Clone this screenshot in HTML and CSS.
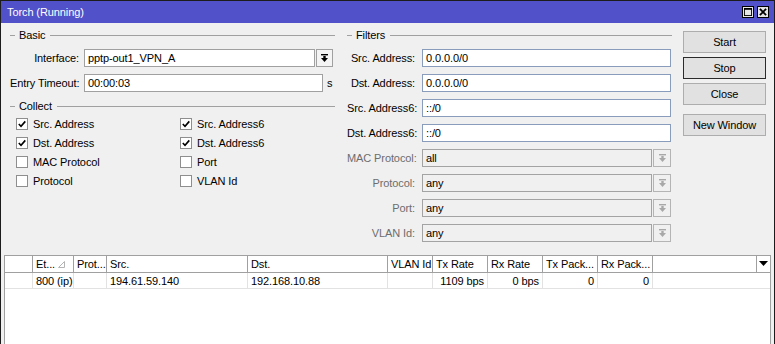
FILE: index.html
```html
<!DOCTYPE html>
<html>
<head>
<meta charset="utf-8">
<link rel="stylesheet" href="styles.css">
</head>
<body>
<div class="window">
  <div class="titlebar">
    <span class="title">Torch (Running)</span>
    <div class="tb-btns">
      <div class="tb-btn"><svg width="9" height="9" viewBox="0 0 9 9"><rect x="0.5" y="0.5" width="8" height="8" fill="none" stroke="#000"/><rect x="0" y="0" width="9" height="2" fill="#000"/></svg></div>
      <div class="tb-btn"><svg width="9" height="9" viewBox="0 0 9 9"><path d="M1 1 L8 8 M8 1 L1 8" stroke="#000" stroke-width="2"/></svg></div>
    </div>
  </div>
  <div class="top">
    <div class="col-left">
      <div class="legend end3">Basic</div>
      <div class="row">
        <div class="label">Interface:</div>
        <div class="field w-iface">pptp-out1_VPN_A</div>
        <div class="ddbtn"><svg width="9" height="9" viewBox="0 0 9 9"><rect x="1" y="0" width="7" height="1.4" fill="#000"/><rect x="3.3" y="2" width="2.4" height="2" fill="#000"/><polygon points="1,4 8,4 4.5,8" fill="#000"/></svg></div>
      </div>
      <div class="row">
        <div class="label">Entry Timeout:</div>
        <div class="field w-timeout">00:00:03</div>
        <span class="unit">s</span>
      </div>
      <div class="legend end3 collect">Collect</div>
      <div class="checks">
        <div class="check"><span class="cb"><svg width="10" height="10" viewBox="0 0 10 10"><path d="M1.8 5 L4 7.3 L8.3 2.4" fill="none" stroke="#000" stroke-width="1.6"/></svg></span>Src. Address</div>
        <div class="check"><span class="cb"><svg width="10" height="10" viewBox="0 0 10 10"><path d="M1.8 5 L4 7.3 L8.3 2.4" fill="none" stroke="#000" stroke-width="1.6"/></svg></span>Src. Address6</div>
        <div class="check"><span class="cb"><svg width="10" height="10" viewBox="0 0 10 10"><path d="M1.8 5 L4 7.3 L8.3 2.4" fill="none" stroke="#000" stroke-width="1.6"/></svg></span>Dst. Address</div>
        <div class="check"><span class="cb"><svg width="10" height="10" viewBox="0 0 10 10"><path d="M1.8 5 L4 7.3 L8.3 2.4" fill="none" stroke="#000" stroke-width="1.6"/></svg></span>Dst. Address6</div>
        <div class="check"><span class="cb"></span>MAC Protocol</div>
        <div class="check"><span class="cb"></span>Port</div>
        <div class="check"><span class="cb"></span>Protocol</div>
        <div class="check"><span class="cb"></span>VLAN Id</div>
      </div>
    </div>
    <div class="col-filters">
      <div class="legend">Filters</div>
      <div class="row"><div class="label f">Src. Address:</div><div class="field active w-filter">0.0.0.0/0</div></div>
      <div class="row"><div class="label f">Dst. Address:</div><div class="field active w-filter">0.0.0.0/0</div></div>
      <div class="row"><div class="label f">Src. Address6:</div><div class="field active w-filter">::/0</div></div>
      <div class="row"><div class="label f">Dst. Address6:</div><div class="field active w-filter">::/0</div></div>
      <div class="row"><div class="label f dis">MAC Protocol:</div><div class="field disabled w-dis">all</div><div class="ddbtn dis-btn"><svg width="9" height="9" viewBox="0 0 9 9"><rect x="1" y="0" width="7" height="1.4" fill="#a8a8a8"/><rect x="3.3" y="2" width="2.4" height="2" fill="#a8a8a8"/><polygon points="1,4 8,4 4.5,8" fill="#a8a8a8"/></svg></div></div>
      <div class="row"><div class="label f dis">Protocol:</div><div class="field disabled w-dis">any</div><div class="ddbtn dis-btn"><svg width="9" height="9" viewBox="0 0 9 9"><rect x="1" y="0" width="7" height="1.4" fill="#a8a8a8"/><rect x="3.3" y="2" width="2.4" height="2" fill="#a8a8a8"/><polygon points="1,4 8,4 4.5,8" fill="#a8a8a8"/></svg></div></div>
      <div class="row"><div class="label f dis">Port:</div><div class="field disabled w-dis">any</div><div class="ddbtn dis-btn"><svg width="9" height="9" viewBox="0 0 9 9"><rect x="1" y="0" width="7" height="1.4" fill="#a8a8a8"/><rect x="3.3" y="2" width="2.4" height="2" fill="#a8a8a8"/><polygon points="1,4 8,4 4.5,8" fill="#a8a8a8"/></svg></div></div>
      <div class="row"><div class="label f dis">VLAN Id:</div><div class="field disabled w-dis">any</div><div class="ddbtn dis-btn"><svg width="9" height="9" viewBox="0 0 9 9"><rect x="1" y="0" width="7" height="1.4" fill="#a8a8a8"/><rect x="3.3" y="2" width="2.4" height="2" fill="#a8a8a8"/><polygon points="1,4 8,4 4.5,8" fill="#a8a8a8"/></svg></div></div>
    </div>
    <div class="col-buttons">
      <div class="btn">Start</div>
      <div class="btn default">Stop</div>
      <div class="btn">Close</div>
      <div class="btn newwin">New Window</div>
    </div>
  </div>
  <div class="table">
    <div class="grid thead">
      <div class="c"></div>
      <div class="c sort">Et...<svg class="sorticon" width="7" height="7" viewBox="0 0 7 7"><path d="M6.5 0.5 L6.5 6.5 L0.5 6.5 Z" fill="none" stroke="#b4b4b4"/></svg></div>
      <div class="c">Prot...</div>
      <div class="c">Src.</div>
      <div class="c">Dst.</div>
      <div class="c">VLAN Id</div>
      <div class="c">Tx Rate</div>
      <div class="c">Rx Rate</div>
      <div class="c">Tx Pack...</div>
      <div class="c">Rx Pack...</div>
      <div class="c"></div>
      <div class="c last"><svg width="9" height="6" viewBox="0 0 9 6"><polygon points="0,0 9,0 4.5,5" fill="#000"/></svg></div>
    </div>
    <div class="grid trow">
      <div class="c"></div>
      <div class="c">800 (ip)</div>
      <div class="c"></div>
      <div class="c">194.61.59.140</div>
      <div class="c">192.168.10.88</div>
      <div class="c"></div>
      <div class="c num">1109 bps</div>
      <div class="c num">0 bps</div>
      <div class="c num">0</div>
      <div class="c num">0</div>
      <div class="c none"></div>
      <div class="c none"></div>
    </div>
  </div>
</div>
</body>
</html>
```

FILE: styles.css
```css
body {
  margin: 0;
  font-family: "Liberation Sans", Arial, sans-serif;
  font-size: 11px;
  letter-spacing: -0.1px;
  color: #000;
}

.window {
  width: 773px;
  height: 343px;
  border: 1px solid #1c1c1c;
  border-bottom: none;
  background: #f0f0f0;
  display: flex;
  flex-direction: column;
  overflow: hidden;
}

.titlebar {
  height: 22px;
  flex-shrink: 0;
  background: #5151c9;
  color: #fff;
  display: flex;
  align-items: center;
  justify-content: space-between;
  padding: 0 5px 0 6px;
  font-size: 11px;
}

.tb-btns {
  display: flex;
  gap: 3px;
}

.tb-btn {
  width: 12px;
  height: 12px;
  box-sizing: border-box;
  border: 1px solid #000;
  background: #e6e6e6;
  display: flex;
  align-items: center;
  justify-content: center;
}

.tb-btn svg {
  width: 8px;
  height: 8px;
}

.top {
  height: 232px;
  flex-shrink: 0;
  box-sizing: border-box;
  display: flex;
  padding: 5px 0 0 9px;
}

.col-left {
  width: 328px;
}

.col-filters {
  width: 325px;
  margin-left: 9px;
}

.col-buttons {
  width: 83px;
  margin-left: 11px;
  padding-top: 3px;
}

.legend {
  height: 14px;
  display: flex;
  align-items: center;
  margin-bottom: 7px;
}

.legend::before {
  content: "";
  width: 5px;
  border-top: 1px solid #a0a0a0;
  margin-right: 4px;
}

.legend::after {
  content: "";
  flex: 1;
  border-top: 1px solid #a0a0a0;
  margin-left: 5px;
}

.legend.end3::after {
  margin-right: 3px;
}

.legend.collect {
  margin-bottom: 1px;
}

.row {
  display: flex;
  align-items: center;
  height: 18px;
  margin-bottom: 7px;
}

.label {
  width: 74px;
  flex-shrink: 0;
  box-sizing: border-box;
  text-align: right;
  padding-right: 5px;
  white-space: nowrap;
}

.label.f {
  width: 75px;
  padding-right: 7px;
}

.label.dis {
  color: #6d6d6d;
}

.field {
  height: 18px;
  box-sizing: border-box;
  border: 1px solid #a0a0a0;
  background: #fff;
  padding-left: 3px;
  display: flex;
  align-items: center;
  white-space: nowrap;
}

.field.active {
  border-color: #8a9cbc;
}

.field.disabled {
  background: #f0f0f0;
  border-color: #a3a3a3;
}

.w-iface { width: 231px; }
.w-timeout { width: 239px; }
.w-filter { width: 249px; }
.w-dis { width: 230px; }

.ddbtn {
  width: 17px;
  height: 18px;
  box-sizing: border-box;
  margin-left: 1px;
  border: 1px solid #a0a0a0;
  background: #f4f4f4;
  display: flex;
  align-items: center;
  justify-content: center;
}

.ddbtn.dis-btn {
  width: 18px;
  background: #f0f0f0;
  border-color: #b4b4b4;
}

.unit {
  margin-left: 4px;
}

.checks {
  display: grid;
  grid-template-columns: 164px 164px;
  grid-auto-rows: 19px;
}

.check {
  display: flex;
  align-items: center;
  padding-left: 6px;
  white-space: nowrap;
}

.cb {
  width: 12px;
  height: 12px;
  box-sizing: border-box;
  border: 1px solid #8e8e8e;
  background: #fff;
  margin-right: 5px;
  display: flex;
  align-items: center;
  justify-content: center;
}

.btn {
  height: 22px;
  box-sizing: border-box;
  border: 1px solid #adadad;
  background: #e1e1e1;
  margin-bottom: 4px;
  display: flex;
  align-items: center;
  justify-content: center;
}

.btn.default {
  border-color: #2b2b2b;
}

.btn.newwin {
  margin-top: 9px;
}

.table {
  flex: 1;
  margin-left: 3px;
  width: 767px;
  box-sizing: border-box;
  border: 1px solid #a0a0a0;
  border-bottom: none;
  background: #fff;
}

.grid {
  display: grid;
  grid-template-columns: 28px 41px 33px 141px 140px 45px 55px 55px 55px 55px 104px 13px;
}

.thead {
  height: 17px;
  box-sizing: border-box;
  border-bottom: 1px solid #a0a0a0;
}

.thead .c {
  border-right: 1px solid #a0a0a0;
}

.c {
  box-sizing: border-box;
  padding-left: 3px;
  display: flex;
  align-items: center;
  white-space: nowrap;
  overflow: hidden;
}

.thead .c.last {
  border-right: none;
  padding-left: 2px;
}

.sort {
  justify-content: space-between;
  padding-right: 8px;
}

.trow {
  height: 16px;
  box-sizing: border-box;
  border-bottom: 1px solid #e2e2e2;
}

.trow .c {
  border-right: 1px solid #e2e2e2;
}

.trow .c.none {
  border-right: none;
}

.c.num {
  justify-content: flex-end;
  padding-right: 3px;
}
```
